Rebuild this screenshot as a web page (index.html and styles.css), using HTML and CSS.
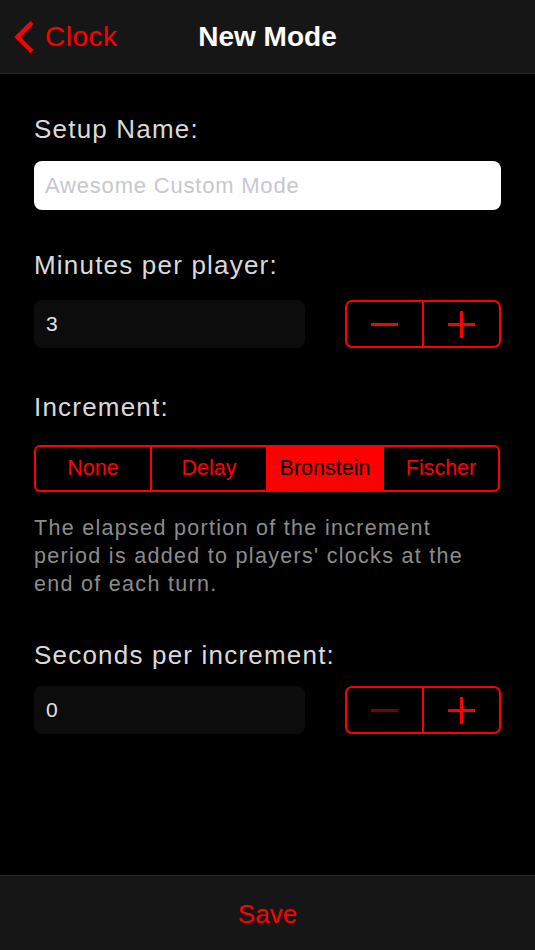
FILE: index.html
```html
<!DOCTYPE html>
<html lang="en">
<head>
<meta charset="utf-8">
<title>New Mode</title>
<link rel="stylesheet" href="styles.css">
</head>
<body>
<div class="screen">
  <header class="nav">
    <a class="back" href="#">
      <svg class="chevron" width="22" height="34" viewBox="0 0 22 34" aria-hidden="true">
        <polyline points="19,2.5 4.5,17 19,31.5" fill="none" stroke="#ff0000" stroke-width="4.5" stroke-linecap="butt" stroke-linejoin="miter"/>
      </svg>
      <span>Clock</span>
    </a>
    <h1 class="title">New Mode</h1>
    <div class="nav-spacer"></div>
  </header>

  <main class="content">
    <section class="group group-name">
      <label class="label label-name">Setup Name:</label>
      <div class="text-input"><span class="placeholder">Awesome Custom Mode</span></div>
    </section>

    <section class="group group-minutes">
      <label class="label label-minutes">Minutes per player:</label>
      <div class="row">
        <div class="number-field">3</div>
        <div class="stepper">
          <button class="step"><span class="minus"></span></button>
          <button class="step"><span class="plus"></span></button>
        </div>
      </div>
    </section>

    <section class="group group-increment">
      <label class="label label-increment">Increment:</label>
      <div class="segmented">
        <div class="seg">None</div>
        <div class="seg">Delay</div>
        <div class="seg selected">Bronstein</div>
        <div class="seg">Fischer</div>
      </div>
      <p class="description">The elapsed portion of the increment period is added to players' clocks at the end of each turn.</p>
    </section>

    <section class="group group-seconds">
      <label class="label label-seconds">Seconds per increment:</label>
      <div class="row">
        <div class="number-field">0</div>
        <div class="stepper">
          <button class="step"><span class="minus disabled"></span></button>
          <button class="step"><span class="plus"></span></button>
        </div>
      </div>
    </section>
  </main>

  <footer class="toolbar">
    <button class="save">Save</button>
  </footer>
</div>
</body>
</html>
```

FILE: styles.css
```css
* { box-sizing: border-box; }

html, body {
  margin: 0;
  padding: 0;
  background: #000;
}

body {
  font-family: "Liberation Sans", Arial, sans-serif;
  color: #dcdcdc;
}

.screen {
  width: 535px;
  height: 950px;
  display: flex;
  flex-direction: column;
  background: #000;
}

/* Navigation bar */
.nav {
  height: 74px;
  flex: none;
  background: #161616;
  border-bottom: 1px solid #262626;
  display: grid;
  grid-template-columns: 1fr auto 1fr;
  align-items: center;
}

.back {
  display: flex;
  align-items: center;
  gap: 10px;
  padding-left: 13px;
  color: #ff0000;
  text-decoration: none;
  font-size: 28px;
  letter-spacing: 0.5px;
  line-height: 34px;
  margin-top: 1px;
}

.chevron { display: block; flex: none; }

.title {
  margin: 0;
  font-size: 28px;
  font-weight: bold;
  color: #fff;
  line-height: 34px;
  margin-top: 1px;
}

/* Content */
.content {
  flex: 1;
  padding: 40px 34px 0 34px;
  display: flex;
  flex-direction: column;
}

.group { display: flex; flex-direction: column; }
.group-minutes { margin-top: 40px; }
.group-increment { margin-top: 44px; }
.group-seconds { margin-top: 42px; }

.label {
  display: block;
  font-size: 26px;
  line-height: 30px;
  letter-spacing: 1.2px;
  color: #dadada;
}
.label-name { margin-bottom: 17px; }
.label-minutes { margin-bottom: 20px; }
.label-increment { margin-bottom: 23px; }
.label-seconds { margin-bottom: 16px; }

.text-input {
  height: 49px;
  width: 467px;
  background: #fff;
  border-radius: 8px;
  display: flex;
  align-items: center;
  padding-left: 11px;
}

.placeholder {
  font-size: 22px;
  letter-spacing: 0.8px;
  color: #c7c7cd;
}

.row {
  display: flex;
  justify-content: space-between;
  align-items: center;
  width: 467px;
}

.number-field {
  width: 271px;
  height: 48px;
  background: #0c0c0c;
  border-radius: 8px;
  display: flex;
  align-items: center;
  padding-left: 12px;
  font-size: 21px;
  color: #e2e2e2;
}

.stepper {
  width: 156px;
  height: 48px;
  border: 2px solid #ff0000;
  border-radius: 7px;
  display: flex;
}

.step {
  flex: 1;
  background: transparent;
  border: none;
  padding: 0;
  display: flex;
  align-items: center;
  justify-content: center;
  position: relative;
}
.step + .step { border-left: 2px solid #ff0000; }

.minus, .plus {
  display: block;
  width: 27px;
  height: 27px;
  position: relative;
}
.minus::before, .plus::before, .plus::after {
  content: "";
  position: absolute;
  background: #ff0000;
}
.minus::before, .plus::before {
  left: 0;
  top: 12.5px;
  width: 27px;
  height: 2.5px;
}
.plus::after {
  left: 12.25px;
  top: 0;
  width: 2.5px;
  height: 27px;
}
.minus.disabled::before { background: #7d0000; }

/* Segmented control */
.segmented {
  display: flex;
  width: 466px;
  height: 47px;
  border: 2px solid #ff0000;
  border-radius: 6px;
  overflow: hidden;
}

.seg {
  flex: 1;
  display: flex;
  align-items: center;
  justify-content: center;
  font-size: 21.5px;
  color: #ff0000;
}
.seg + .seg { border-left: 2px solid #ff0000; }
.seg.selected {
  background: #ff0000;
  color: #000;
}

.description {
  margin: 22px 0 0 0;
  font-size: 21.5px;
  line-height: 28px;
  letter-spacing: 1.3px;
  color: #8c8c8c;
}

/* Bottom toolbar */
.toolbar {
  height: 75px;
  flex: none;
  background: #161616;
  border-top: 1px solid #2a2a2a;
  display: flex;
  align-items: center;
  justify-content: center;
}

.save {
  background: transparent;
  border: none;
  padding: 0;
  font-family: "Liberation Sans", Arial, sans-serif;
  font-size: 26px;
  color: #ff0000;
  margin-top: 2px;
}
```
